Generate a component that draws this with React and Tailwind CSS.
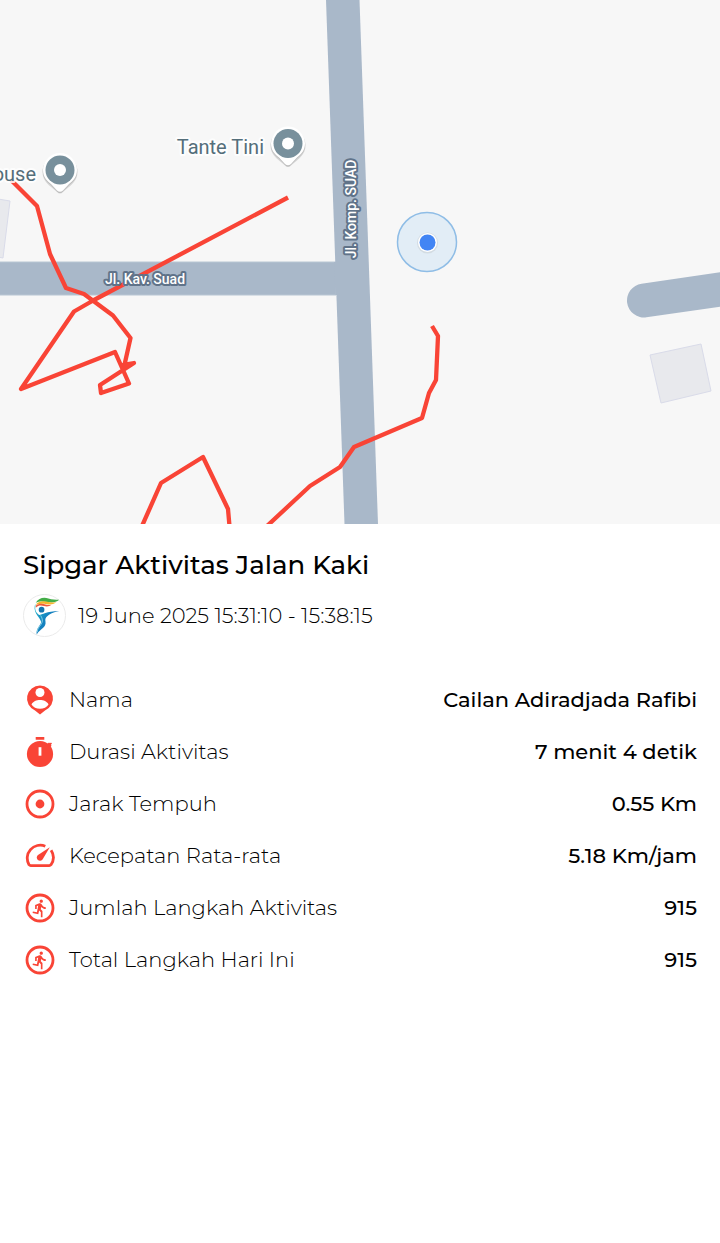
const route = "#f94436";

function MapPin({ x, y }) {
  return (
    <g transform={`translate(${x} ${y})`}>
      <path d="M-17.500 2a17.500 17.500 0 1 1 35 0c0 7-4 11-8 14.500L3 22q-3 3-6 0L-9.500 16.500c-4-3.500-8-7.500-8-14.500z" fill="#888" opacity=".3" />
      <path d="M-17.200 1a17.200 17.200 0 1 1 34.400 0c0 7-4 11-8 14L3 21.500q-3 3-6 0L-9.200 15c-4-3-8-7-8-14z" fill="#999" opacity=".4" />
      <path d="M-17 0a17 17 0 1 1 34 0c0 7-4 11-8 14L3 20.500q-3 2.500-6 0L-9 14c-4-3-8-7-8-14z" fill="#fff" />
      <circle r="14.500" fill="#78909c" />
      <circle r="6" fill="#fff" />
    </g>
  );
}

function RouteMap() {
  return (
    <svg viewBox="0 0 720 524" className="block w-full bg-[#f7f7f7] font-[Roboto,sans-serif]" role="img" aria-label="Peta rute">
      <path d="M-8 198 10 201 3 258-8 256z" fill="#e8e9ed" stroke="#d9dbe9" />
      <path d="M650 355 701 344 711 391 661 403z" fill="#e8e9ed" stroke="#d9dbe9" />
      <path d="M-2 262H336V295H-2z" fill="#a9b8c9" stroke="#b8c6d3" />
      <path d="M326 0H359.500L378 524H344.500z" fill="#a9b8c9" />
      <path d="M334 262H343V295H335.500z" fill="#a9b8c9" />
      <path d="M644 300.500 730 288" stroke="#a9b8c9" strokeWidth="34" strokeLinecap="round" />
      <g fill="none" stroke={route} strokeWidth="4.300" strokeLinejoin="round">
        <path d="M11 180 37 206 50 254 66 288 84 294 113 315.500 130.500 338 124 367 M122 365 134 363 100 385 101 393 129 383.500 115 352 21 389 74 311.500 94 300 288 197.500" />
        <path d="M142 526 161 483 203 457 228 509 229.500 526" />
        <path d="M267 526 310 486 340 467 354 447 422 418 429 393 436 380 438 336 432 326" />
      </g>
      <circle cx="427" cy="242" r="29.500" fill="#e2edf6" stroke="#8fbde6" strokeWidth="1.500" />
      <circle cx="427.500" cy="243" r="10.500" fill="#c9d0d6" opacity=".6" />
      <circle cx="427.500" cy="242.500" r="9.500" fill="#fff" />
      <circle cx="427.500" cy="242.500" r="8" fill="#4285f4" />
      <MapPin x={60} y={170} />
      <MapPin x={288} y={143.500} />
      <g fill="#546e7a" stroke="#fff" strokeWidth="4" strokeOpacity=".85" paintOrder="stroke" strokeLinejoin="round" fontSize="20">
        <text x="36" y="181" textAnchor="end">ouse</text>
        <text x="264" y="154" textAnchor="end">Tante Tini</text>
      </g>
      <g fill="#fff" stroke="#607389" strokeWidth="4" paintOrder="stroke" strokeLinejoin="round" fontSize="14" fontWeight="500" textAnchor="middle">
        <text x="145" y="284">Jl. Kav. Suad</text>
        <text transform="translate(356 209) rotate(-90)">Jl. Komp. SUAD</text>
      </g>
    </svg>
  );
}

function Icon({ children }) {
  return (
    <svg viewBox="-1 -1 34 34" className="size-[34px] shrink-0 text-[#f94436]" fill="currentColor" aria-hidden="true">
      {children}
    </svg>
  );
}

const PersonIcon = () => (
  <Icon>
    <path d="M16 1.500a13 13 0 0 0-5 25L16 30.500l5-4a13 13 0 0 0-5-25z" />
    <circle cx="16" cy="8.500" r="4.500" fill="#fff" />
    <path d="M7.500 20.500c1.500-3.300 5-4.500 8.500-4.500s7 1.200 8.500 4.500c-1.500 2.800-5 4.300-8.500 4.300s-7-1.500-8.500-4.300z" fill="#fff" />
  </Icon>
);

const TimerIcon = () => (
  <Icon>
    <path d="M11.700 1h8.600v2.700h-8.600zM22.500 8.500l2.500-2 1 .7 1-.8 1 1.400-1.200 1 .7 1-1.500 2z" />
    <circle cx="16" cy="18" r="13.100" />
    <path d="M14.600 11.200h2.800v8.500h-2.800z" fill="#fff" />
  </Icon>
);

const TargetIcon = () => (
  <Icon>
    <circle cx="16" cy="16" r="13" fill="none" stroke="currentColor" strokeWidth="2.800" />
    <circle cx="16" cy="16" r="4.400" />
  </Icon>
);

const GaugeIcon = () => (
  <Icon>
    <path d="M21.300 6.200A13 13 0 0 0 5 24.700q.7.900 1.800.9h18.400q1.100 0 1.800-.9A13 13 0 0 0 27.100 10.300" fill="none" stroke="currentColor" strokeWidth="2.800" />
    <path d="M25.800 7.300 18.700 19.300a3.200 3.200 0 1 1-4.700-4.200z" />
  </Icon>
);

const RunIcon = () => (
  <Icon>
    <circle cx="16" cy="16" r="13" fill="none" stroke="currentColor" strokeWidth="2.800" />
    <path
      transform="translate(6.200 6.300) scale(.82)"
      d="M13.490 5.480c1.100 0 2-.9 2-2s-.9-2-2-2-2 .9-2 2 .9 2 2 2zm-3.600 13.900l1-4.400 2.100 2v6h2v-7.500l-2.100-2 .6-3c1.300 1.500 3.300 2.500 5.500 2.500v-2c-1.900 0-3.500-1-4.300-2.400l-1-1.600c-.4-.6-1-1-1.700-1-.3 0-.5.1-.8.1l-5.200 2.200v4.700h2v-3.400l1.800-.7-1.600 8.100-4.900-1-.4 2 7 1.400z"
    />
  </Icon>
);

function Logo() {
  return (
    <svg viewBox="0 0 44 44" className="size-[43px] shrink-0" role="img" aria-label="Sipgar">
      <defs>
        <linearGradient id="body" x1="0" y1="0" x2="1" y2="1">
          <stop offset="0" stopColor="#22c3cf" />
          <stop offset=".45" stopColor="#1583c0" />
          <stop offset="1" stopColor="#1172b8" />
        </linearGradient>
      </defs>
      <circle cx="22" cy="22" r="21.500" fill="#fff" stroke="#e9e9e9" />
      <path d="M13 9c3-5 8-6 13-4.500 4 1.200 7 1.300 11 1.500-3 3-8 3-12 2.300C20 7.500 16 7.500 13 9z" fill="#43ad48" />
      <path d="M13 11c3-4 8-4 12-3 3 .9 6 1 9 .2-3 3-7 2.700-10 2.200-4-.8-7-.4-11 .6z" fill="#f7b52c" />
      <path d="M13 12c3-2.500 7-2.500 10-1.300 2 .8 4 .7 6 .3-2 2-5 2-7.500 1.300-3-.9-6-.7-8.500 1.700z" fill="#ed5a3b" />
      <circle cx="19" cy="16" r="2.900" fill="#1475ae" />
      <path d="M13 10c-1.500 6 .2 9 3.500 11.500 3.500 0 7-3.800 20.500-4-6 1-10 3-12.500 5.500-1.500 1.500-2 3-1.500 5C24 35 18 35 14 41.500c-1-7 5-10 4.500-13C18 24.500 10.500 20 12 12z" fill="url(#body)" />
      <path d="M18 22c2 3 2.500 6 .5 9-2 2.500-4 5-4 8" fill="none" stroke="#a5e6ed" strokeWidth=".8" />
    </svg>
  );
}

const stats = [
  { icon: PersonIcon, label: "Nama", value: "Cailan Adiradjada Rafibi" },
  { icon: TimerIcon, label: "Durasi Aktivitas", value: "7 menit 4 detik" },
  { icon: TargetIcon, label: "Jarak Tempuh", value: "0.55 Km" },
  { icon: GaugeIcon, label: "Kecepatan Rata-rata", value: "5.18 Km/jam" },
  { icon: RunIcon, label: "Jumlah Langkah Aktivitas", value: "915" },
  { icon: RunIcon, label: "Total Langkah Hari Ini", value: "915" },
];

export default function App() {
  return (
    <main className="min-h-screen bg-white font-[Montserrat,Inter,sans-serif] text-black [font-variant-ligatures:no-common-ligatures]">
      <RouteMap />
      <section className="px-[23px] pt-[23px]">
        <h1 className="text-[26px] leading-9 font-medium">Sipgar Aktivitas Jalan Kaki</h1>
        <div className="mt-[11px] flex items-center gap-3">
          <Logo />
          <time className="text-[21px] leading-7 font-light">19 June 2025 15:31:10 - 15:38:15</time>
        </div>
        <dl className="mt-[37px]">
          {stats.map(({ icon: StatIcon, label, value }) => (
            <div key={label} className="flex h-13 items-center justify-between gap-4 text-[21px] leading-7">
              <dt className="flex items-center gap-3 font-light">
                <StatIcon />
                {label}
              </dt>
              <dd className="text-right font-medium">{value}</dd>
            </div>
          ))}
        </dl>
      </section>
    </main>
  );
}
